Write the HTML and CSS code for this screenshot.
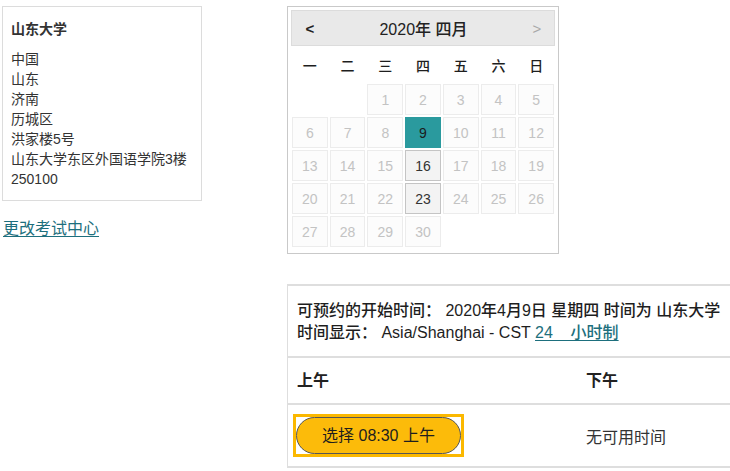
FILE: index.html
```html
<!DOCTYPE html>
<html lang="zh-CN">
<head>
<meta charset="utf-8">
<title>选择考试时间</title>
<link rel="stylesheet" href="styles.css">
</head>
<body>
<div class="page">
  <aside class="side">
    <div class="address">
      <div class="address-name">山东大学</div>
      <div class="address-line">中国</div>
      <div class="address-line">山东</div>
      <div class="address-line">济南</div>
      <div class="address-line">历城区</div>
      <div class="address-line">洪家楼5号</div>
      <div class="address-line">山东大学东区外国语学院3楼</div>
      <div class="address-line">250100</div>
    </div>
    <a class="change-link" href="#">更改考试中心</a>
  </aside>

  <main class="main">
    <div class="calendar">
      <div class="cal-head">
        <span class="cal-nav cal-prev">&lt;</span>
        <span class="cal-title">2020年 四月</span>
        <span class="cal-nav cal-next">&gt;</span>
      </div>
      <div class="cal-weekdays">
        <span>一</span><span>二</span><span>三</span><span>四</span><span>五</span><span>六</span><span>日</span>
      </div>
      <div class="cal-days">
        <span class="day blank"></span>
        <span class="day blank"></span>
        <span class="day off">1</span>
        <span class="day off">2</span>
        <span class="day off">3</span>
        <span class="day off">4</span>
        <span class="day off">5</span>
        <span class="day off">6</span>
        <span class="day off">7</span>
        <span class="day off">8</span>
        <span class="day selected">9</span>
        <span class="day off">10</span>
        <span class="day off">11</span>
        <span class="day off">12</span>
        <span class="day off">13</span>
        <span class="day off">14</span>
        <span class="day off">15</span>
        <span class="day open">16</span>
        <span class="day off">17</span>
        <span class="day off">18</span>
        <span class="day off">19</span>
        <span class="day off">20</span>
        <span class="day off">21</span>
        <span class="day off">22</span>
        <span class="day open">23</span>
        <span class="day off">24</span>
        <span class="day off">25</span>
        <span class="day off">26</span>
        <span class="day off">27</span>
        <span class="day off">28</span>
        <span class="day off">29</span>
        <span class="day off">30</span>
      </div>
    </div>

    <section class="slots">
      <div class="slots-info">
        <div>可预约的开始时间： 2020年4月9日 星期四 时间为 山东大学</div>
        <div>时间显示： Asia/Shanghai - CST <a class="clock-link" href="#">24&nbsp;&nbsp;&nbsp;&nbsp;小时制</a></div>
      </div>
      <div class="slots-row slots-head">
        <div class="slots-cell">上午</div>
        <div class="slots-cell">下午</div>
      </div>
      <div class="slots-row slots-body">
        <div class="slots-cell cell-am">
          <span class="focus-ring"><button class="slot-btn" type="button">选择 08:30 上午</button></span>
        </div>
        <div class="slots-cell">无可用时间</div>
      </div>
    </section>
  </main>
</div>
</body>
</html>
```

FILE: styles.css
```css
html, body {
  margin: 0;
  padding: 0;
  background: #fff;
  overflow: hidden;
}

body {
  font-family: "Liberation Sans", "Noto Sans CJK SC", sans-serif;
  color: #2b2b2b;
  font-size: 16px;
}

.page {
  display: flex;
  align-items: flex-start;
  padding-top: 6px;
}

/* left column: test centre address */
.side {
  width: 287px;
  padding-left: 2px;
  box-sizing: border-box;
  flex: none;
}

.address {
  width: 200px;
  box-sizing: border-box;
  border: 1px solid #dcdcdc;
  padding: 12px 8px 11px 8px;
  font-size: 14px;
  line-height: 20px;
  color: #333;
}

.address-name {
  font-weight: 700;
  margin-bottom: 10px;
}

.change-link {
  display: inline-block;
  margin-top: 18px;
  margin-left: 1px;
  font-size: 16px;
  line-height: 20px;
  color: #1d6f7d;
  text-decoration: underline;
  text-underline-offset: 2px;
}

/* right column */
.main {
  flex: none;
  width: 460px;
}

.calendar {
  width: 272px;
  box-sizing: border-box;
  border: 1px solid #c9c9c9;
  padding: 3px 3px 3px 3px;
}

.cal-head {
  height: 36px;
  box-sizing: border-box;
  border: 1px solid #dcdcdc;
  background: #e9e9e9;
  display: flex;
  align-items: center;
  justify-content: space-between;
  padding: 0 12px 0 13px;
}

.cal-title {
  font-size: 16px;
  font-weight: 500;
  color: #222;
}

.cal-nav {
  font-size: 15px;
  font-weight: 700;
  color: #222;
  width: 10px;
  text-align: center;
}

.cal-next {
  font-weight: 400;
  color: #a8a8a8;
}

.cal-weekdays,
.cal-days {
  display: grid;
  grid-template-columns: repeat(7, 1fr);
  column-gap: 2px;
  padding: 0 1px;
}

.cal-weekdays {
  height: 35px;
  margin-top: 1px;
  margin-bottom: 2px;
  align-items: center;
  text-align: center;
  font-size: 14px;
  font-weight: 500;
  color: #1e1e1e;
}

.cal-days {
  row-gap: 2px;
  grid-auto-rows: 31px;
  margin-bottom: 3px;
}

.day {
  box-sizing: border-box;
  display: flex;
  align-items: center;
  justify-content: center;
  font-size: 14px;
}

.day.off {
  border: 1px solid #ececec;
  background: #fcfcfc;
  color: #c3c3c3;
}

.day.open {
  border: 1px solid #c4c4c4;
  background: #f3f3f3;
  color: #333;
}

.day.selected {
  background: #2a9a9e;
  color: #1b1b1b;
}

/* available time slots */
.slots {
  margin-top: 30px;
  border-left: 1px solid #dedede;
  border-bottom: 2px solid #dedede;
}

.slots-info {
  border-top: 2px solid #dedede;
  padding: 14px 9px 12px 9px;
  line-height: 22px;
  font-weight: 500;
  color: #1e1e1e;
  white-space: nowrap;
}

.clock-link {
  color: #1d6f7d;
  text-decoration: underline;
  text-underline-offset: 2px;
}

.slots-row {
  display: grid;
  grid-template-columns: 289px 1fr;
  border-top: 2px solid #dedede;
}

.slots-head {
  font-weight: 700;
  color: #222;
  line-height: 22px;
}

.slots-head .slots-cell {
  padding: 12px 9px 11px 9px;
}

.slots-body .slots-cell {
  display: flex;
  align-items: center;
  padding: 9px 9px 9px 9px;
  color: #333;
}

.slots-body .cell-am {
  padding-left: 5px;
}

.focus-ring {
  display: inline-block;
  border: 3px solid #fbb800;
  background: #fff;
  line-height: 0;
}

.slot-btn {
  margin: 0;
  width: 165px;
  height: 37px;
  box-sizing: border-box;
  border: 1px solid #555;
  border-radius: 19px;
  background: #fcbb0a;
  color: #1e1e1e;
  font-family: "Liberation Sans", "Noto Sans CJK SC", sans-serif;
  font-size: 16px;
  line-height: 20px;
  padding: 0;
  cursor: pointer;
}
```
